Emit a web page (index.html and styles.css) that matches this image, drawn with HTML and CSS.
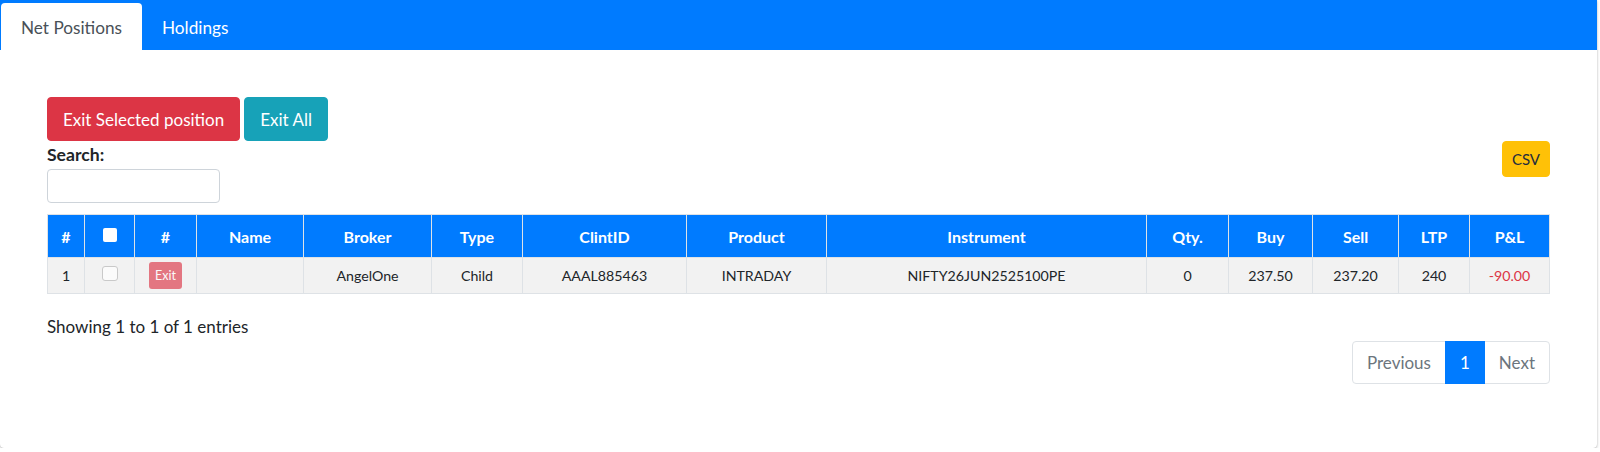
FILE: index.html
```html
<!DOCTYPE html>
<html lang="en">
<head>
<meta charset="utf-8">
<title>Net Positions</title>
<link rel="stylesheet" href="styles.css">
</head>
<body>
<div class="card">
  <div class="card-header">
    <ul class="tabs">
      <li class="tab active">Net Positions</li>
      <li class="tab">Holdings</li>
    </ul>
  </div>
  <div class="card-body">
    <div class="actions">
      <button class="btn btn-danger">Exit Selected position</button>
      <button class="btn btn-info">Exit All</button>
    </div>
    <div class="toolbar">
      <div class="search">
        <label class="search-label" for="q">Search:</label>
        <input class="search-input" id="q" type="search">
      </div>
      <button class="btn btn-warning btn-sm">CSV</button>
    </div>
    <table class="grid">
      <colgroup>
        <col class="w37"><col class="w50"><col class="w62"><col class="w107"><col class="w128"><col class="w91"><col class="w164"><col class="w140"><col class="w320"><col class="w82"><col class="w84"><col class="w86"><col class="w71"><col class="w80">
      </colgroup>
      <thead>
        <tr>
          <th>#</th>
          <th><input class="chk chk-head" type="checkbox"></th>
          <th>#</th>
          <th>Name</th>
          <th>Broker</th>
          <th>Type</th>
          <th>ClintID</th>
          <th>Product</th>
          <th>Instrument</th>
          <th>Qty.</th>
          <th>Buy</th>
          <th>Sell</th>
          <th>LTP</th>
          <th>P&amp;L</th>
        </tr>
      </thead>
      <tbody>
        <tr>
          <td>1</td>
          <td><input class="chk chk-row" type="checkbox" disabled></td>
          <td><button class="btn-xs">Exit</button></td>
          <td></td>
          <td>AngelOne</td>
          <td>Child</td>
          <td>AAAL885463</td>
          <td>INTRADAY</td>
          <td>NIFTY26JUN2525100PE</td>
          <td>0</td>
          <td>237.50</td>
          <td>237.20</td>
          <td>240</td>
          <td class="loss">-90.00</td>
        </tr>
      </tbody>
    </table>
    <div class="info">Showing 1 to 1 of 1 entries</div>
    <div class="pager">
      <ul class="pagination">
        <li class="page-link">Previous</li>
        <li class="page-link current">1</li>
        <li class="page-link">Next</li>
      </ul>
    </div>
  </div>
</div>
</body>
</html>
```

FILE: styles.css
```css
* { box-sizing: border-box; }

body {
  margin: 0;
  background: #fff;
  color: #212529;
  font-family: Lato, "Open Sans", sans-serif;
  font-size: 17px;
}

.card {
  width: 1597px;
  background: #fff;
  border-radius: 0 0 4px 4px;
  box-shadow: 0 0 1px rgba(0,0,0,.2), 0 1px 3px rgba(0,0,0,.25);
}

.card-header {
  background: #007bff;
  height: 50px;
  padding: 3px 0 0 1px;
}

.tabs {
  display: flex;
  margin: 0;
  padding: 0;
  list-style: none;
  height: 47px;
}

.tab {
  display: flex;
  align-items: center;
  padding: 2px 20px 0;
  font-size: 17.2px;
  color: #fff;
  border-radius: 4px 4px 0 0;
}

.tab.active {
  background: #fff;
  color: #495057;
}

.card-body {
  padding: 47px 47px 64px;
}

.actions {
  display: flex;
  gap: 4px;
}

.btn {
  font-family: inherit;
  font-size: 17px;
  height: 44px;
  padding: 0 15px;
  border: 1px solid transparent;
  border-radius: 4px;
  color: #fff;
  cursor: pointer;
}

.btn-danger { background: #dc3545; border-color: #dc3545; }
.btn-info { background: #17a2b8; border-color: #17a2b8; }

.btn-warning {
  background: #ffc107;
  border-color: #ffc107;
  color: #1f2d3d;
}

.btn-sm {
  font-size: 15px;
  height: 36px;
  padding: 0 9px;
}

.toolbar {
  display: flex;
  justify-content: space-between;
  align-items: flex-start;
}

.search-label {
  display: block;
  font-weight: 700;
  font-size: 17.6px;
  line-height: 28px;
}

.search-input {
  display: block;
  width: 173px;
  height: 34px;
  margin: 0;
  border: 1px solid #ced4da;
  border-radius: 4px;
  background: #fff;
}

.grid {
  margin-top: 11px;
  width: 1502px;
  table-layout: fixed;
  border-collapse: collapse;
  font-size: 14.2px;
}

.w37 { width: 37px; }
.w50 { width: 50px; }
.w62 { width: 62px; }
.w107 { width: 107px; }
.w128 { width: 128px; }
.w91 { width: 91px; }
.w164 { width: 164px; }
.w140 { width: 140px; }
.w320 { width: 320px; }
.w82 { width: 82px; }
.w84 { width: 84px; }
.w86 { width: 86px; }
.w71 { width: 71px; }
.w80 { width: 80px; }

.grid th,
.grid td {
  border: 1px solid #dee2e6;
  text-align: center;
  vertical-align: middle;
  padding: 0 4px;
}

.grid th {
  background: #007bff;
  color: #fff;
  font-weight: 700;
  font-size: 16px;
  height: 43px;
}

.grid td {
  background: #f2f2f2;
  height: 36px;
}

.loss { color: #dc3545; }

.chk {
  appearance: none;
  -webkit-appearance: none;
  display: inline-block;
  vertical-align: middle;
  margin: 0;
}

.chk-head {
  width: 14px;
  height: 14px;
  background: #fff;
  border-radius: 2px;
  margin-bottom: 4px;
}

.chk-row {
  width: 16px;
  height: 15px;
  background: #fbfbfb;
  border: 1px solid #c9c9c9;
  border-radius: 3px;
  margin-bottom: 5px;
}

.btn-xs {
  font-family: inherit;
  font-size: 12.5px;
  height: 27px;
  padding: 0 6px;
  border: 0;
  border-radius: 3px;
  background: #dc3545;
  color: #fff;
  opacity: .65;
  vertical-align: middle;
}

.info {
  margin-top: 20px;
  line-height: 26px;
}

.pager {
  display: flex;
  justify-content: flex-end;
  margin-top: 1px;
}

.pagination {
  display: flex;
  margin: 0;
  padding: 0;
  list-style: none;
}

.page-link {
  height: 43px;
  line-height: 41px;
  padding: 0 14px;
  border: 1px solid #dee2e6;
  color: #6c757d;
  background: #fff;
  margin-left: -1px;
}

.page-link:first-child {
  margin-left: 0;
  border-radius: 4px 0 0 4px;
}

.page-link:last-child {
  border-radius: 0 4px 4px 0;
}

.page-link.current {
  background: #007bff;
  border-color: #007bff;
  color: #fff;
  position: relative;
  z-index: 1;
}
```
